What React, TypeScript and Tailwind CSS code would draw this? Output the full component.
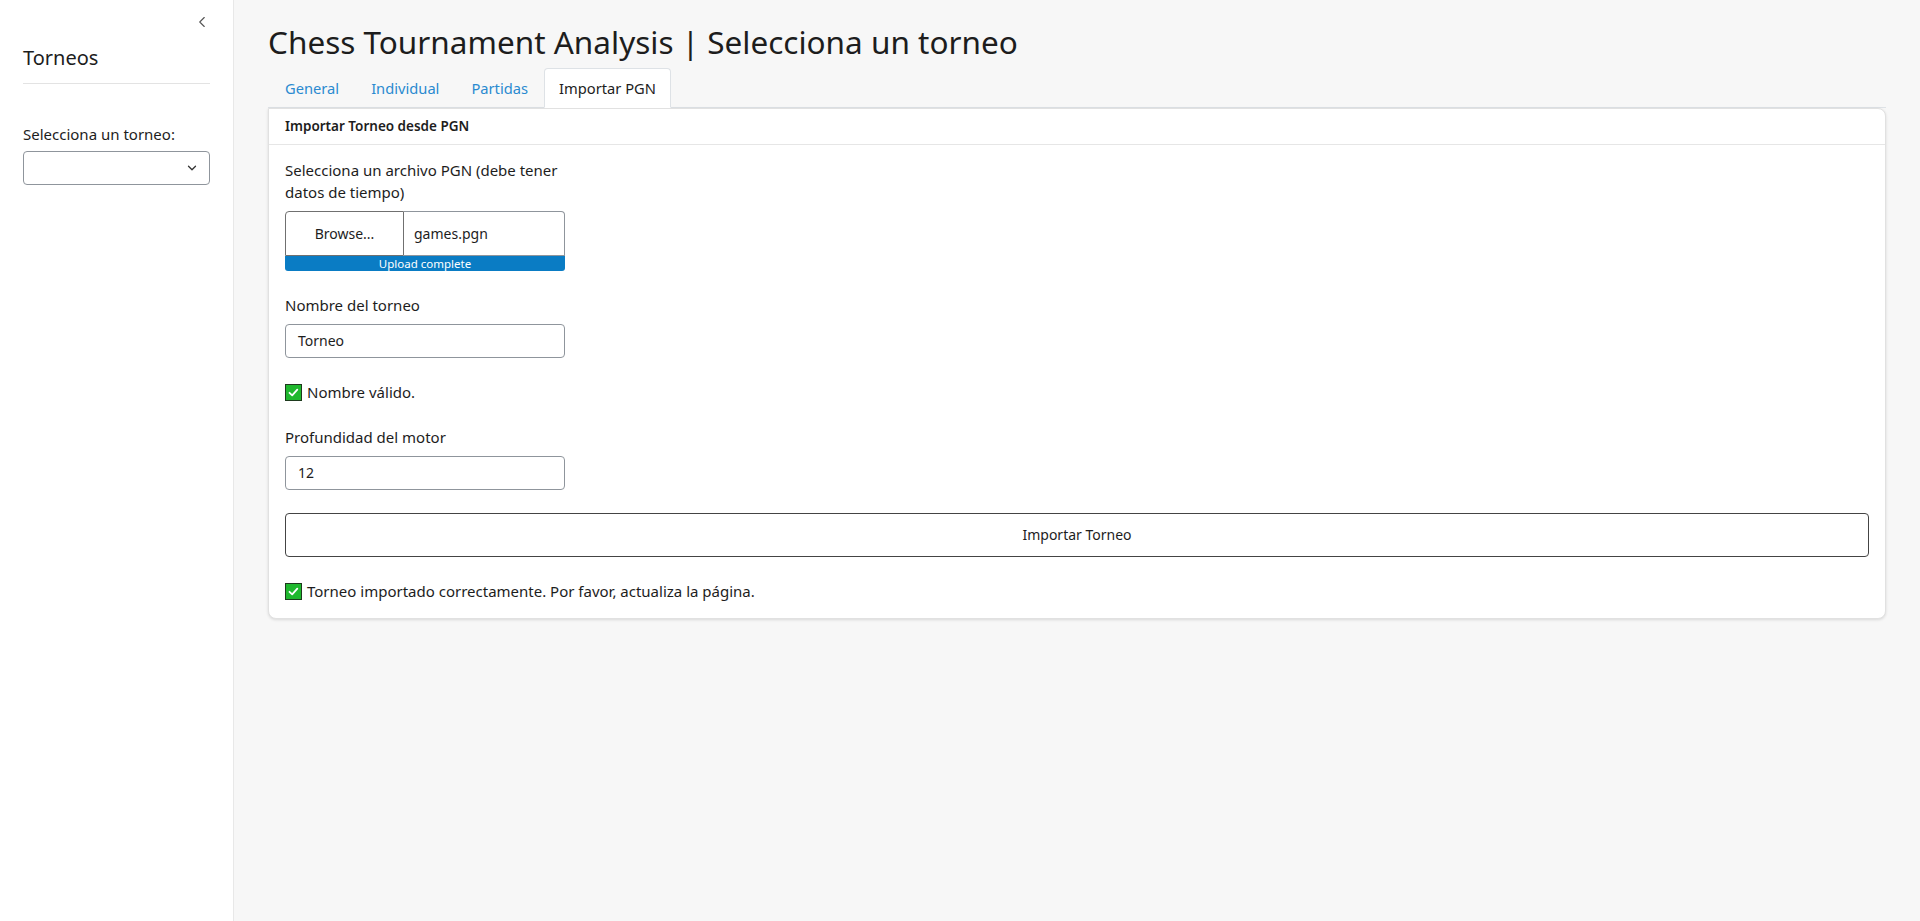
import { ChevronDown, ChevronLeft } from 'lucide-react';

const font = { fontFamily: '"Noto Sans", "Open Sans", sans-serif' };

function CheckBox() {
  return (
    <svg width="17" height="17" viewBox="0 0 17 17" className="shrink-0">
      <rect x="0.5" y="0.5" width="16" height="16" fill="#1fb82e" stroke="#1e3a1e" />
      <path d="M4.5 8.8 L7.2 11.3 L12.3 5.6" fill="none" stroke="#fff" strokeWidth="1.8" strokeLinecap="round" strokeLinejoin="round" />
    </svg>
  );
}

const tabs = ['General', 'Individual', 'Partidas'];

export default function App() {
  return (
    <div className="flex h-[921px] bg-[#f7f7f7] text-[#1d1d1d]" style={font}>
      <aside className="relative w-[234px] shrink-0 border-r border-[#e8e8e8] bg-white px-[23px]">
        <button className="absolute right-[22px] top-[13px] text-[#555]">
          <ChevronLeft size={18} strokeWidth={1.5} />
        </button>
        <h2 className="mt-[46px] pb-[13px] text-[20px] leading-[24px] border-b border-[#e3e3e3]">Torneos</h2>
        <label className="mt-[39px] block text-[15px] leading-[22px]">Selecciona un torneo:</label>
        <div className="mt-[6px] flex h-[34px] items-center justify-end rounded-[4px] border border-[#8f959c] px-[10px]">
          <ChevronDown size={14} strokeWidth={2.2} className="text-[#333]" />
        </div>
      </aside>

      <main className="flex-1 pl-[34px] pr-[34px]">
        <h1 className="mt-[22px] text-[31.5px] leading-[40px] whitespace-nowrap">
          Chess Tournament Analysis | Selecciona un torneo
        </h1>
        <nav className="mt-[6px] flex border-b border-[#dee2e6] pl-[1px]">
          {tabs.map((t) => (
            <a key={t} className="-mb-px border border-transparent px-[15px] pt-[8px] pb-[8px] text-[14.7px] leading-[22px] text-[#2a8ad0]">
              {t}
            </a>
          ))}
          <a className="-mb-px rounded-t-[4px] border border-[#dee2e6] border-b-white bg-white px-[14px] pt-[8px] pb-[8px] text-[14.7px] leading-[22px] text-[#1d1d1d]">
            Importar PGN
          </a>
        </nav>

        <section className="rounded-[8px] rounded-tl-none border border-[#e1e1e1] bg-white shadow-[0_1px_3px_rgba(0,0,0,0.12)]">
          <div className="border-b border-[#e6e6e6] px-[16px] py-[8px] text-[13.5px] font-semibold leading-[19px]">
            Importar Torneo desde PGN
          </div>
          <div className="px-[16px] pt-[14px] pb-[16px] text-[15px] leading-[22px]">
            <div className="w-[280px]">
              <div>Selecciona un archivo PGN (debe tener datos de tiempo)</div>
              <div className="mt-[8px] flex h-[45px]">
                <button className="w-[119px] rounded-tl-[4px] border border-[#707070] text-[14px]">Browse...</button>
                <div className="flex flex-1 items-center rounded-tr-[4px] border border-l-0 border-[#8f959c] px-[10px] text-[14px]">
                  games.pgn
                </div>
              </div>
              <div className="flex h-[15px] items-center justify-center rounded-b-[3px] bg-[#0a7cc4] text-[11.5px] leading-[15px] text-white">
                Upload complete
              </div>
            </div>

            <div className="mt-[23px] w-[280px]">
              <div>Nombre del torneo</div>
              <div className="mt-[8px] flex h-[34px] items-center rounded-[4px] border border-[#8f959c] px-[12px] text-[14px]">Torneo</div>
            </div>

            <div className="mt-[23px] flex items-center gap-[5px]">
              <CheckBox />
              <span>Nombre válido.</span>
            </div>

            <div className="mt-[23px] w-[280px]">
              <div>Profundidad del motor</div>
              <div className="mt-[8px] flex h-[34px] items-center rounded-[4px] border border-[#8f959c] px-[12px] text-[14px]">12</div>
            </div>

            <button className="mt-[23px] flex h-[44px] w-full items-center justify-center rounded-[4px] border border-[#444] text-[14px]">
              Importar Torneo
            </button>

            <div className="mt-[23px] flex items-center gap-[5px]">
              <CheckBox />
              <span>Torneo importado correctamente. Por favor, actualiza la página.</span>
            </div>
          </div>
        </section>
      </main>
    </div>
  );
}
